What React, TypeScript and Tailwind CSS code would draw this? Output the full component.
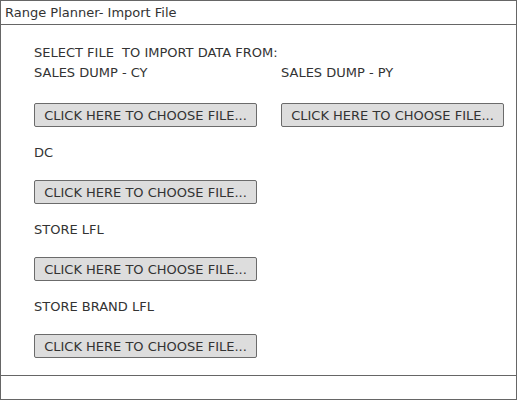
const font = { fontFamily: '"DejaVu Sans", sans-serif' };

function FileButton() {
  return (
    <button className="w-[223px] h-[24px] bg-[#dddddd] border border-[#6b6b6b] rounded-[2px] text-[13px] text-[#333] text-center leading-none">
      CLICK HERE TO CHOOSE FILE...
    </button>
  );
}

function Field({ label, first }: { label: string; first?: boolean }) {
  return (
    <div className="flex flex-col">
      <div className="h-[20px] leading-[20px]">{label}</div>
      <div className={first ? "mt-[20px]" : "mt-[17px]"}>
        <FileButton />
      </div>
    </div>
  );
}

export default function App() {
  return (
    <div
      style={font}
      className="w-[517px] h-[400px] border border-[#666] flex flex-col text-[13px] text-[#333] bg-white"
    >
      <div className="h-[24px] border-b border-[#666] px-[4px] flex items-center">
        Range Planner- Import File
      </div>
      <div className="flex-1 pl-[33px] pt-[18px]">
        <div className="h-[20px] leading-[20px]">SELECT FILE&nbsp; TO IMPORT DATA FROM:</div>
        <div className="flex flex-col gap-[16px]">
          <div className="grid grid-cols-[247px_247px]">
            <Field label="SALES DUMP - CY" first />
            <Field label="SALES DUMP - PY" first />
          </div>
          <Field label="DC" />
          <Field label="STORE LFL" />
          <Field label="STORE BRAND LFL" />
        </div>
      </div>
      <div className="h-[24px] border-t border-[#666]" />
    </div>
  );
}
